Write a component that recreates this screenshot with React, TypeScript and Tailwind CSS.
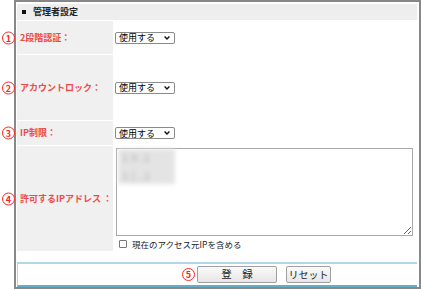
import React from "react";

const jp = { fontFamily: '"Noto Sans CJK JP", "Noto Sans", sans-serif' };

function Circle({ n }: { n: string }) {
  return (
    <span className="w-[13px] h-[13px] rounded-full border-[1.6px] border-[#ff2424] flex items-center justify-center text-[9px] leading-none font-bold text-[#ff2424] bg-white">
      {n}
    </span>
  );
}

function Select() {
  return (
    <div className="w-[60px] h-[12px] border border-[#8a8a8a] rounded-[2px] bg-white flex items-center justify-between pl-[3px] pr-[4px] text-[9px] leading-none text-black">
      <span>使用する</span>
      <svg width="6" height="4" viewBox="0 0 6 4">
        <path d="M0.6 0.6 L3 3 L5.4 0.6" fill="none" stroke="#111" strokeWidth="1.4" />
      </svg>
    </div>
  );
}

function Label({ num, text }: { num: string; text: string }) {
  return (
    <div className="relative bg-[#f0f0f0] flex items-center pl-[3px] text-[9px] font-bold text-[#ee4a4a]">
      <span className="absolute left-[-15px] top-1/2 -translate-y-1/2">
        <Circle n={num} />
      </span>
      {text}
    </div>
  );
}

export default function App() {
  return (
    <div className="w-[421px] h-[290px] overflow-hidden bg-white" style={jp}>
      <div className="ml-[14px] w-[407px] border-2 border-[#888] pt-[2px] pl-[1px] pr-[2px]">
        <div className="h-[16px] bg-[#eeeeee] flex items-center pl-[5px] text-[9px] font-bold text-[#222]">
          <span className="w-[4px] h-[4px] bg-[#111] mr-[7px]" />
          管理者設定
        </div>

        <div className="mt-[1px] grid grid-cols-[96px_1fr] grid-rows-[33px_65px_24px_105px] gap-x-[1px] gap-y-[1px]">
          <Label num="1" text="2段階認証：" />
          <div className="flex items-center pl-[1px]">
            <Select />
          </div>

          <Label num="2" text="アカウントロック：" />
          <div className="flex items-center pl-[1px]">
            <Select />
          </div>

          <Label num="3" text="IP制限：" />
          <div className="flex items-center pl-[1px]">
            <Select />
          </div>

          <Label num="4" text="許可するIPアドレス ：" />
          <div className="pl-[2px] pr-[4px] pt-[2px]">
            <div className="relative h-[88px]">
              <textarea
                readOnly
                className="block w-full h-full border border-[#a9a9a9] bg-white outline-none"
              />
              <div className="absolute left-[2px] top-[1px] w-[57px] h-[35px] bg-[#e4e4e4] blur-[2px] flex flex-col justify-around pl-[4px] text-[11px] font-bold leading-none text-[#c2c2c2]">
                <span>1 9 .1</span>
                <span>1 ( . 2</span>
              </div>
            </div>
            <div className="mt-[2px] flex items-center pl-[3px] text-[8.5px] text-[#222]">
              <span className="w-[8px] h-[8px] border border-[#777] rounded-[1px] bg-white mr-[5px]" />
              現在のアクセス元IPを含める
            </div>
          </div>
        </div>

        <div className="mt-[11px] h-[25px] border-t-2 border-t-[#b3d6e4] border-b-2 border-b-[#5fb1c9] border-l border-l-[#b3d6e4] flex items-center pl-[164px]">
          <span className="mr-[2px]">
            <Circle n="5" />
          </span>
          <button className="w-[80px] h-[17px] border border-[#a0a0a0] rounded-[2px] bg-gradient-to-b from-[#fafafa] to-[#e6e6e6] text-[10.5px] leading-none text-[#222]">
            登　録
          </button>
          <button className="ml-[9px] w-[45px] h-[17px] border border-[#a0a0a0] rounded-[2px] bg-gradient-to-b from-[#fafafa] to-[#e6e6e6] text-[10px] leading-none text-[#222]">
            リセット
          </button>
        </div>
      </div>
    </div>
  );
}
